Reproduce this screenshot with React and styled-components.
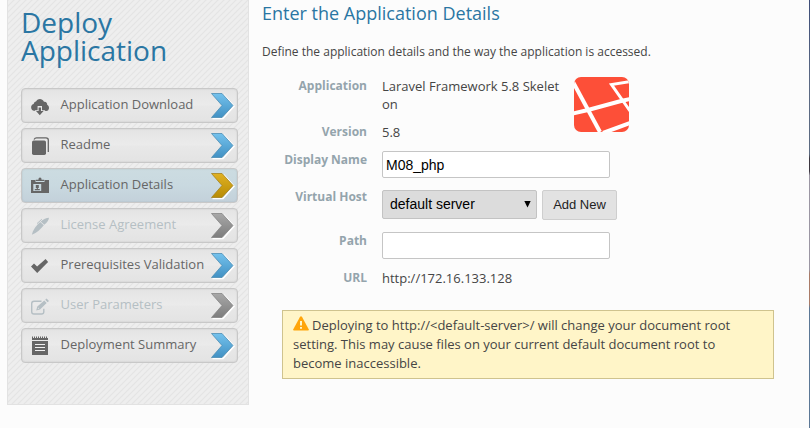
import React from "react";
import styled, { createGlobalStyle, css } from "styled-components";

const Global = createGlobalStyle`
  * { box-sizing: border-box; }
  body {
    margin: 0;
    background: #fcfcfc;
    color: #454545;
    font: 13px/18px "Open Sans", "Noto Sans", sans-serif;
  }
`;

const Page = styled.div`
  display: flex;
  align-items: flex-start;
  height: 428px;
  padding: 0 1px 0 7px;
  overflow: hidden;
  background:
    linear-gradient(#3d4d78, #5c6a84 20%, #5c6a80 36%, #3c3640 37%, #3c3640 40%, #9b96a3 41%, #9b96a3 63%, #a97b68 64%, #a97b68 71%, #5c7896 72%, #5c7896) right / 1px 100% no-repeat,
    #fcfcfc;
`;

const Sidebar = styled.aside`
  flex: none;
  width: 242px;
  height: 405px;
  padding: 8px 0 0 13px;
  border: 1px solid #e2e2e2;
  border-top: 0;
  background: linear-gradient(
    135deg,
    #e4e4e4 0,
    #eeeeee 12%,
    #eeeeee 38%,
    #e4e4e4 50%,
    #eeeeee 62%,
    #eeeeee 88%,
    #e4e4e4 100%
  ) 0 0 / 6px 6px;
`;

const SidebarTitle = styled.h1`
  margin: 0 0 24px;
  color: #2a76a3;
  font-size: 28px;
  font-weight: 400;
  line-height: 28px;
`;

const Steps = styled.ol`
  display: flex;
  flex-direction: column;
  gap: 5px;
  margin: 0;
  padding: 0;
  list-style: none;
`;

const Step = styled.li`
  display: flex;
  align-items: flex-start;
  width: 217px;
  height: 35px;
  padding: 4px 2px 0 8px;
  border: 1px solid #c8c8c8;
  border-radius: 4px;
  box-shadow: inset 0 0 2px rgba(0, 0, 0, 0.12);
  color: #666;
  background: linear-gradient(#e4e4e4, #ebebeb 48%, #e8e8e8 52%, #e3e3e3);
  ${(p) => p.$state === "current" && css`
    background: linear-gradient(#ccdce1, #c9d9e0 50%, #c3d1da);
  `}
  ${(p) => p.$state === "disabled" && css`
    color: #b5bfc4;
  `}
`;

const StepIcon = styled.svg`
  flex: none;
  width: 20px;
  height: 20px;
  margin-top: 3px;
`;

const StepLabel = styled.span`
  flex: 1;
  margin: 2px 0 0 10.5px;
  white-space: nowrap;
`;

const Chevron = styled.svg`
  flex: none;
  width: 25px;
  height: 27px;
`;

const Main = styled.main`
  flex: 1;
  padding: 3px 0 0 13px;
`;

const Heading = styled.h2`
  margin: 0;
  color: #2a76a3;
  font-size: 18px;
  font-weight: 400;
  line-height: 20px;
`;

const Intro = styled.p`
  margin: 20px 0 16px;
  font-size: 12px;
`;

const Row = styled.div`
  display: flex;
  align-items: flex-start;
  height: ${(p) => p.$height}px;
`;

const Label = styled.label`
  width: 105px;
  margin-right: 15px;
  color: #94a4ac;
  font-size: 12px;
  font-weight: 700;
  text-align: right;
`;

const Value = styled.span`
  width: ${(p) => (p.$wide ? "auto" : "178px")};
  word-break: break-all;
`;

const TextField = styled.input`
  width: 228px;
  height: 27px;
  padding: 0 3px;
  border: 1px solid #c5c5c5;
  border-radius: 2px;
  background: #fff;
  color: #000;
  font: 14px "Liberation Sans", Arial, sans-serif;
`;

const HostSelect = styled.button`
  display: flex;
  align-items: center;
  justify-content: space-between;
  width: 155px;
  height: 29px;
  padding: 0 5px 2px 7px;
  border: 1px solid #c3c3c3;
  border-radius: 2px;
  background: #dcdcdc;
  color: #000;
  font: 14px "Liberation Sans", Arial, sans-serif;
`;

const AddButton = styled.button`
  width: 75px;
  height: 30px;
  margin-left: 5px;
  padding: 0 0 1px;
  border: 1px solid #cecece;
  border-radius: 2px;
  background: #e2e2e2;
  color: #222;
  font: 13px "Liberation Sans", Arial, sans-serif;
`;

const Controls = styled.div`
  display: flex;
  margin-top: ${(p) => p.$offset || 0}px;
`;

const Logo = styled.svg`
  width: 55px;
  height: 55px;
  margin-left: 14px;
`;

const Notice = styled.div`
  width: 492px;
  height: 69px;
  margin-left: 20px;
  padding: 5px 10px;
  border: 1px solid #cfc38e;
  background: #fff5c8;
  line-height: 19px;
`;

const WarningIcon = styled.svg`
  width: 16px;
  height: 15px;
  margin-right: 3px;
  vertical-align: -1px;
`;

const chevronColors = {
  active: ["#74c2ed", "#4291c3", "#4e8eb4"],
  current: ["#e0b123", "#b78c05", "#a58320"],
  disabled: ["#a8a8a8", "#7d7d7d", "#858585"],
};

const icons = {
  download: (
    <>
      <path d="M4.4 15A3.6 3.6 0 0 1 3.6 8A3.2 3.2 0 0 1 6.2 5.3C8 2.3 12.2 2.3 14 5.7C16 5.3 17.4 6.7 17.2 8.8C20 10.2 19.4 15 16.4 15Z" />
      <path d="M7.6 14.2V10H12V14.2H15.4L9.8 20L4.4 14.2Z" fill="#e9e9e9" />
      <path d="M8.6 11.4H11V15H13.6L9.8 19.2L6 15H8.6Z" />
    </>
  ),
  readme: (
    <>
      <rect x="2" y="4.5" width="14" height="14.5" rx="1.7" />
      <path d="M4 3.5Q5 1.8 6.5 1.8H16Q18.3 1.8 18.3 4V16" fill="none" stroke="currentColor" strokeWidth="1.3" />
    </>
  ),
  details: (
    <>
      <path fillRule="evenodd" d="M1 4H5.5V6H14.5V4H19V17H1ZM3.3 8V15H11.2V8Z" />
      <path d="M5.8 5V3.7H8.4Q8.4 1.6 10 1.6T11.6 3.7H14.2V5Z" />
      <path d="M5.8 9H8.8V12H5.8ZM4.8 13H9.8V14.2H4.8Z" />
      <path d="M6.7 11.4H7.9V13.4H6.7Z" />
    </>
  ),
  license: (
    <>
      <path d="M1.8 18.8C2.8 14.2 6.1 9.5 10.2 6L13.8 9.2C10.8 13 7 16.6 1.8 18.8Z" />
      <path d="M10.6 5.6Q15 1.7 19 1.7Q18.7 5.2 14.3 8.8Z" />
      <path d="M7 7.6L11.8 3.2" stroke="currentColor" strokeWidth="1" />
    </>
  ),
  check: <path d="M1 10.5L4 7.5L7.1 10.6L15.6 3.1L18.1 5.9L7.2 17Z" />,
  parameters: (
    <>
      <path d="M11.5 5.2H4Q1.7 5.2 1.7 7.5V15.7Q1.7 18 4 18H11.5Q13.8 18 13.8 15.7V12.7" fill="none" stroke="currentColor" strokeWidth="1.4" />
      <path fillRule="evenodd" d="M6.2 14.4L7.3 10.6L14.3 4.6L16.7 7.1L10 13.4ZM15.2 3.8L16.6 2.6L19 5L17.6 6.2ZM7.8 12.9L9.2 12.5L8.2 11.5Z" />
    </>
  ),
  summary: (
    <>
      <path d="M2 5H18V19H2Z" />
      <path d="M2.5 .5V2.5M4.5 .5V2.5M6.5 .5V2.5M8.5 .5V2.5M10.5 .5V2.5M12.5 .5V2.5M14.5 .5V2.5M16.5 .5V2.5" stroke="currentColor" strokeWidth="1" />
      <path d="M2 3H18" stroke="currentColor" strokeWidth="2" />
      <path d="M5 8.5H15M5 11.5H15M5 14.5H15" stroke="#efefef" strokeWidth="1" />
    </>
  ),
};

const steps = [
  { icon: "download", label: "Application Download", state: "active" },
  { icon: "readme", label: "Readme", state: "active" },
  { icon: "details", label: "Application Details", state: "current" },
  { icon: "license", label: "License Agreement", state: "disabled" },
  { icon: "check", label: "Prerequisites Validation", state: "active" },
  { icon: "parameters", label: "User Parameters", state: "disabled" },
  { icon: "summary", label: "Deployment Summary", state: "active" },
];

function StepChevron({ state }) {
  const [top, bottom, edge] = chevronColors[state];
  return (
    <Chevron viewBox="0 0 25 27">
      <defs>
        <linearGradient id={`chevron-${state}`} x1="0" y1="0" x2="0" y2="1">
          <stop stopColor={top} />
          <stop offset="1" stopColor={bottom} />
        </linearGradient>
      </defs>
      <path d="M2.5 25.4H13L24 13.2L13.5 1.4" fill="none" stroke="#fff" strokeWidth="1.5" />
      <path d="M1.5.5H12L23 12.5L12 24.5H1.5L12 12.5Z" fill={`url(#chevron-${state})`} stroke={edge} strokeWidth=".8" />
    </Chevron>
  );
}

export default function App() {
  return (
    <>
      <Global />
      <Page>
        <Sidebar>
          <SidebarTitle>Deploy<br />Application</SidebarTitle>
          <Steps>
            {steps.map(({ icon, label, state }) => (
              <Step key={icon} $state={state}>
                <StepIcon viewBox="0 0 20 20" fill="currentColor">{icons[icon]}</StepIcon>
                <StepLabel>{label}</StepLabel>
                <StepChevron state={state} />
              </Step>
            ))}
          </Steps>
        </Sidebar>
        <Main>
          <Heading>Enter the Application Details</Heading>
          <Intro>Define the application details and the way the application is accessed.</Intro>
          <Row $height={46}>
            <Label>Application</Label>
            <Value>Laravel Framework 5.8 Skeleton</Value>
            <Logo viewBox="0 0 55 55">
              <defs><clipPath id="logo-shape"><rect width="55" height="55" rx="7" /></clipPath></defs>
              <g clipPath="url(#logo-shape)">
                <path fill="#fd4f38" d="M0 0H55V55H0Z" />
                <path d="M-1 5L26 55" fill="none" stroke="#fff" strokeWidth="4" />
                <path d="M-1 36.5L14 33L47 24L56 22" fill="none" stroke="#fff" strokeWidth="4" />
                <path d="M56 4.5L37.5 7.5L56 34" fill="none" stroke="#fff" strokeWidth="3" />
                <path d="M29 56L56 46" fill="none" stroke="#fff" strokeWidth="4" />
              </g>
            </Logo>
          </Row>
          <Row $height={28}>
            <Label>Version</Label>
            <Value>5.8</Value>
          </Row>
          <Row $height={37}>
            <Label>Display Name</Label>
            <TextField defaultValue="M08_php" />
          </Row>
          <Row $height={44}>
            <Label>Virtual Host</Label>
            <Controls $offset={2}>
              <HostSelect>
                default server
                <svg width="7" height="8" viewBox="0 0 7 8"><path d="M.3 1H6.7L3.5 7.5Z" /></svg>
              </HostSelect>
              <AddButton>Add New</AddButton>
            </Controls>
          </Row>
          <Row $height={37}>
            <Label>Path</Label>
            <Controls><TextField defaultValue="" /></Controls>
          </Row>
          <Row $height={41}>
            <Label>URL</Label>
            <Value $wide>http://172.16.133.128</Value>
          </Row>
          <Notice>
            <WarningIcon viewBox="0 0 16 15">
              <path fill="#ffa50a" d="M8 .3Q8.7.3 9.2 1.2L15.7 13.3Q16 14.5 15 14.5H1Q0 14.5.3 13.3L6.8 1.2Q7.3.3 8 .3Z" />
              <path d="M8 5V9.6M8 11V12.8" stroke="#fff5c8" strokeWidth="2" />
            </WarningIcon>
            Deploying to http://&lt;default-server&gt;/ will change your document root setting. This may cause files on your current default document root to become inaccessible.
          </Notice>
        </Main>
      </Page>
    </>
  );
}
